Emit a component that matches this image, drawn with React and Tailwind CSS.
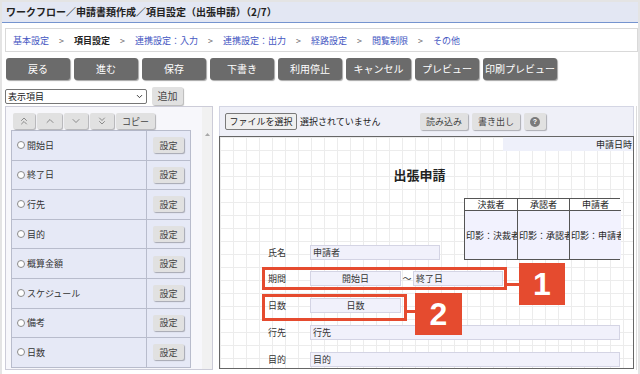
import React from 'react';
import { ChevronUp, ChevronDown, ChevronsUp, ChevronsDown } from 'lucide-react';

const steps = [
  { label: '基本設定' },
  { label: '項目設定', current: true },
  { label: '連携設定：入力' },
  { label: '連携設定：出力' },
  { label: '経路設定' },
  { label: '閲覧制限' },
  { label: 'その他' },
];

const actions = [
  { label: '戻る', w: 'w-[64px]' },
  { label: '進む', w: 'w-[64px]' },
  { label: '保存', w: 'w-[64px]' },
  { label: '下書き', w: 'w-[64px]' },
  { label: '利用停止', w: 'w-[64px]' },
  { label: 'キャンセル', w: 'w-[65px]' },
  { label: 'プレビュー', w: 'w-[64px]' },
  { label: '印刷プレビュー', w: 'w-[74px]' },
];

const items = ['開始日', '終了日', '行先', '目的', '概算金額', 'スケジュール', '備考', '日数'];

const approvers = ['決裁者', '承認者', '申請者'];

function LightButton({ className = '', children }) {
  return (
    <div className={`flex items-center justify-center bg-[#e1e1e1] text-[#444] rounded-[2px] shadow-[1px_1px_1px_rgba(0,0,0,0.28)] ${className}`}>
      {children}
    </div>
  );
}

function Field({ className = '', children }) {
  return (
    <div className={`h-[15px] bg-[#f1f1fb] border border-[#d4d4e4] flex items-center px-[2px] text-[#333] ${className}`}>
      {children}
    </div>
  );
}

function Badge({ n, className = '' }) {
  return (
    <div className={`absolute w-[46px] h-[42px] bg-[#e54b2f] flex items-center justify-center text-white text-[32px] font-bold leading-none font-['Liberation_Sans',sans-serif] ${className}`}>
      {n}
    </div>
  );
}

export default function App() {
  return (
    <div className="w-[640px] h-[374px] overflow-hidden bg-white border-x-2 border-t-2 border-[#e4e4e4] font-['Noto_Sans_CJK_JP',sans-serif] text-[9px] text-[#333] leading-none">
      {/* title */}
      <div className="h-[21px] bg-[#e3e7f3] border-b border-[#7594cf] flex items-center px-[4px] text-[10px] font-bold text-[#222]">
        ワークフロー／申請書類作成／項目設定（出張申請）（2/7）
      </div>

      {/* breadcrumb */}
      <div className="mt-[5px] ml-[3px] h-[24px] border border-[#d9d9d9] flex items-center px-[7px] gap-[10px] text-[9px]">
        {steps.map((s, i) => (
          <React.Fragment key={s.label}>
            {i > 0 && <span className="text-[#666]">&gt;</span>}
            <span className={s.current ? 'font-bold text-[#222]' : 'text-[#4456c2]'}>{s.label}</span>
          </React.Fragment>
        ))}
      </div>

      {/* action buttons */}
      <div className="mt-[6px] ml-[4px] flex gap-[4px]">
        {actions.map((a) => (
          <div key={a.label} className={`${a.w} h-[22px] bg-[#6b6b6b] text-white text-[10px] rounded-[3px] flex items-center justify-center shadow-[1px_1px_1px_rgba(0,0,0,0.35)] whitespace-nowrap`}>
            {a.label}
          </div>
        ))}
      </div>

      {/* select row */}
      <div className="mt-[7px] ml-[3px] h-[18px] flex items-center gap-[5px]">
        <div className="w-[142px] h-[15px] border border-[#767676] rounded-[2px] flex items-center justify-between px-[2px] text-[9px] text-[#222]">
          <span>表示項目</span>
          <ChevronDown size={9} strokeWidth={2.5} className="text-[#333]" />
        </div>
        <LightButton className="w-[31px] h-[18px] text-[10px]">追加</LightButton>
      </div>

      {/* main */}
      <div className="mt-[1px] ml-[3px] flex gap-[6px]">
        {/* left panel */}
        <div className="w-[208px] h-[264px] border border-[#ccccd8] bg-[#f7f7fb] flex">
          <div className="flex-1 pl-[5px] pt-[6px]">
            <div className="ml-[2px] h-[16px] flex gap-[2px] text-[#666]">
              <LightButton className="w-[22px] h-[16px] text-[#666]"><ChevronsUp size={12} strokeWidth={1.4} /></LightButton>
              <LightButton className="w-[25px] h-[16px] text-[#666]"><ChevronUp size={12} strokeWidth={1.4} /></LightButton>
              <LightButton className="w-[24px] h-[16px] text-[#666]"><ChevronDown size={12} strokeWidth={1.4} /></LightButton>
              <LightButton className="w-[24px] h-[16px] text-[#666]"><ChevronsDown size={12} strokeWidth={1.4} /></LightButton>
              <LightButton className="w-[39px] h-[16px] text-[9px]">コピー</LightButton>
            </div>
            <div className="mt-[1px] w-[180px] border-t border-x border-[#b8bccc] bg-[#e6e9f6]">
              {items.map((it) => (
                <div key={it} className="h-[29.6px] border-b border-[#b8bccc] flex">
                  <div className="w-[135px] border-r border-[#b8bccc] flex items-center pl-[5px] gap-[2px]">
                    <span className="w-[8px] h-[8px] rounded-full border border-[#8a8a8a] bg-white" />
                    <span className="text-[9px] text-[#333]">{it}</span>
                  </div>
                  <div className="flex-1 flex items-center justify-center">
                    <LightButton className="w-[31px] h-[16px] text-[9px]">設定</LightButton>
                  </div>
                </div>
              ))}
            </div>
          </div>
          <div className="w-[10px] bg-[#f1f1f1] pt-[26px] flex justify-center">
            <svg width="5" height="3" viewBox="0 0 5 3"><polygon points="2.5,0 5,3 0,3" fill="#a8a8a8" /></svg>
          </div>
        </div>

        {/* right panel */}
        <div className="w-[418px] h-[264px] border-r border-[#dcdcdc] flex flex-col">
          <div className="w-[415px] h-[30px] border border-b-0 border-[#d4d6e4] bg-[#eff0f8] flex items-center pl-[5px]">
            <div className="w-[72px] h-[17px] border border-[#7a7a7a] bg-[#efefef] rounded-[2px] flex items-center justify-center text-[9px] text-[#222] whitespace-nowrap">
              ファイルを選択
            </div>
            <span className="w-[123px] pl-[3px] text-[9px] text-[#222]">選択されていません</span>
            <div className="flex gap-[4px]">
              <LightButton className="w-[48px] h-[17px] text-[9px]">読み込み</LightButton>
              <LightButton className="w-[48px] h-[17px] text-[9px]">書き出し</LightButton>
              <LightButton className="w-[22px] h-[17px]">
                <span className="w-[10px] h-[10px] rounded-full bg-[#7a7a7a] text-white text-[7px] font-bold flex items-center justify-center font-['Liberation_Sans',sans-serif]">?</span>
              </LightButton>
            </div>
          </div>

          {/* form canvas */}
          <div className="w-[415px] h-[233px] border border-[#666] bg-white bg-[linear-gradient(#ececec_1px,transparent_1px),linear-gradient(90deg,#ececec_1px,transparent_1px)] bg-[size:13px_13px] flex flex-col">
            <div className="flex justify-end">
              <div className="w-[130px] h-[14px] bg-[#eef0fa] flex items-center justify-end pr-[1px] text-[9px] text-[#222]">申請日時</div>
            </div>
            <div className="mt-[17px] h-[13px] pr-[14px] flex justify-center text-[13px] font-bold text-[#222]">出張申請</div>

            <div className="mt-[17px] flex items-end">
              <div className="flex-1 pl-[48px] flex items-center">
                <span className="w-[42px]">氏名</span>
                <Field className="w-[130px]">申請者</Field>
              </div>
              <div className="mr-[13px] w-[156px] border border-[#555] flex">
                {approvers.map((a, i) => (
                  <div key={a} className={`w-[52px] flex flex-col ${i > 0 ? 'border-l border-[#555]' : ''}`}>
                    <div className="h-[12px] bg-white border-b border-[#555] flex items-center justify-center text-[9px] text-[#222]">{a}</div>
                    <div className="h-[48px] bg-[#f2f2fe] flex items-center overflow-hidden whitespace-nowrap pl-[1px] text-[9px] text-[#222]">
                      印影：{a}
                    </div>
                  </div>
                ))}
              </div>
            </div>

            {/* 期間 */}
            <div className="mt-[7px] ml-[42px] w-[245px] h-[23px] border-[3px] border-[#e54b2f] flex items-center pl-[3px] relative">
              <span className="w-[42px]">期間</span>
              <Field className="w-[91px] justify-center">開始日</Field>
              <span className="w-[12px] text-center text-[9px]">〜</span>
              <Field className="w-[90px]">終了日</Field>
              <div className="absolute left-full top-[13px] w-[15px] h-[3px] bg-[#e54b2f]" />
              <Badge n="1" className="left-[calc(100%+15px)] top-[-7px]" />
            </div>

            {/* 日数 */}
            <div className="mt-[4px] ml-[42px] w-[145px] h-[27px] border-[3px] border-[#e54b2f] flex items-start pt-[1px] pl-[3px] relative">
              <span className="w-[42px] h-[15px] flex items-center">日数</span>
              <Field className="w-[91px] justify-center">日数</Field>
              <div className="absolute left-full top-[13px] w-[11px] h-[3px] bg-[#e54b2f]" />
              <Badge n="2" className="left-[calc(100%+11px)] top-[-4px] w-[47px]" />
            </div>

            <div className="mt-[4px] pl-[48px] flex items-center">
              <span className="w-[42px]">行先</span>
              <Field className="w-[310px]">行先</Field>
            </div>
            <div className="mt-[12px] pl-[48px] flex items-center">
              <span className="w-[42px]">目的</span>
              <Field className="w-[310px]">目的</Field>
            </div>
          </div>
        </div>
      </div>
    </div>
  );
}
